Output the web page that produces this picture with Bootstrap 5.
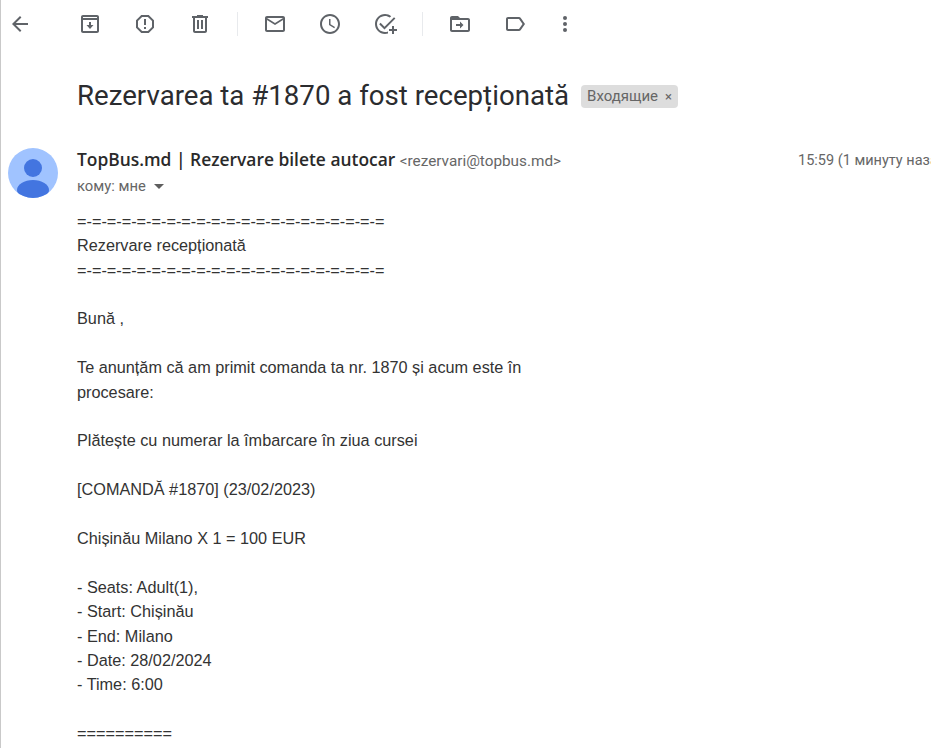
<!doctype html>
<html lang="ro">
<head>
<meta charset="utf-8">
<title>Rezervarea ta #1870</title>
<link href="https://cdn.jsdelivr.net/npm/bootstrap@5.3.0/dist/css/bootstrap.min.css" rel="stylesheet">
<style>
html,body{height:100%;overflow:hidden}
body{background:#fff;font-family:"Liberation Sans",Arial,sans-serif;color:#333}
.mail-frame{width:931px;height:748px;overflow:hidden;border-left:1px solid #c9c9c9}
.tool-bar{height:48px}
.tool-btn{width:55px;height:48px;color:#5f6368}
.tool-back{width:37px;margin-right:24.5px}
.tool-narrow{width:45px}
.tool-btn svg{width:24px;height:24px;fill:currentColor}
.tool-sep{width:1px;height:24px;background:#e8eaed;margin:0 9.5px}
.subject-row{margin-left:76px;margin-top:23px;height:50px}
.subject-text{font-family:Roboto,sans-serif;font-size:27.65px;line-height:50px;color:#2b2c2f;white-space:nowrap}
.label-chip{background:#ddd;color:#666;font-size:15px;height:23px;line-height:23px;padding:0 6px;border-radius:4px;margin-left:12px;font-family:Roboto,sans-serif;white-space:nowrap}
.label-chip span{margin-left:7px;font-size:13px}
.head-row{margin-top:27px;height:50px;padding-left:7px}
.avatar-box{width:50px;height:50px;flex:none;margin-right:19px}
.head-main{width:721px;flex:none;margin-top:-1px}
.sender-line{font-family:"Open Sans",sans-serif;font-size:17.4px;line-height:24px;color:#2a2a2a;white-space:nowrap}
.sender-line b{font-weight:600}
.sender-line span{font-family:Roboto,sans-serif;font-size:15.300px;color:#666;margin-left:0}
.to-line{font-family:Roboto,sans-serif;font-size:14.800px;line-height:24px;color:#666;display:flex;align-items:center;margin-top:1px}
.to-caret{width:0;height:0;border-left:5px solid transparent;border-right:5px solid transparent;border-top:5px solid #5e5e5e;margin-left:8px}
.time-text{font-family:Roboto,sans-serif;font-size:14.5px;line-height:24px;color:#666;white-space:nowrap;padding-top:1px}
.msg-body{margin:10.8px 0 0 76px;width:455px;font-size:16.25px;line-height:24.4px;color:#333}
.msg-body p{margin:0 0 24.4px}
</style>
</head>
<body>
<div class="mail-frame">
  <div class="tool-bar d-flex align-items-center">
    <div class="tool-btn tool-back d-flex align-items-center justify-content-center"><svg viewBox="0 0 24 24"><path d="M20 11H7.83l5.59-5.59L12 4l-8 8 8 8 1.41-1.41L7.83 13H20v-2z"/></svg></div>
    <div class="tool-btn d-flex align-items-center justify-content-center"><svg viewBox="0 0 24 24"><path d="M19 3H5c-1.1 0-2 .9-2 2v14c0 1.1.9 2 2 2h14c1.1 0 2-.9 2-2V5c0-1.100-.9-2-2-2zm0 16H5V8h14v11zM5 6V5h14v1H5z"/><path d="M11 10h2v3h2.500L12 17l-3.500-4H11z"/></svg></div>
    <div class="tool-btn d-flex align-items-center justify-content-center"><svg viewBox="0 0 24 24"><path d="M15.730 3H8.270L3 8.270v7.460L8.270 21h7.460L21 15.730V8.270L15.730 3zM19 14.900L14.900 19H9.100L5 14.900V9.100L9.100 5h5.800L19 9.100v5.800z"/><path d="M11 7h2v6h-2zM11 15h2v2h-2z"/></svg></div>
    <div class="tool-btn d-flex align-items-center justify-content-center"><svg viewBox="0 0 24 24"><path d="M15 4V3H9v1H4v2h1v13c0 1.100.9 2 2 2h10c1.100 0 2-.9 2-2V6h1V4h-5zm2 15H7V6h10v13z"/><path d="M9 8h2v9H9zm4 0h2v9h-2z"/></svg></div>
    <div class="tool-sep"></div>
    <div class="tool-btn d-flex align-items-center justify-content-center"><svg viewBox="0 0 24 24"><path d="M20 4H4c-1.100 0-2 .9-2 2v12c0 1.100.9 2 2 2h16c1.100 0 2-.9 2-2V6c0-1.100-.9-2-2-2zm0 14H4V8l8 5 8-5v10zm-8-7L4 6h16l-8 5z"/></svg></div>
    <div class="tool-btn d-flex align-items-center justify-content-center"><svg viewBox="0 0 24 24"><path d="M11.990 2C6.470 2 2 6.480 2 12s4.470 10 9.990 10C17.520 22 22 17.520 22 12S17.520 2 11.990 2zM12 20c-4.420 0-8-3.580-8-8s3.580-8 8-8 8 3.580 8 8-3.580 8-8 8z"/><path d="M12.500 7H11v6l5.250 3.150.75-1.230-4.500-2.670z"/></svg></div>
    <div class="tool-btn d-flex align-items-center justify-content-center"><svg viewBox="0 0 24 24"><path d="M12 20c-4.420 0-8-3.580-8-8s3.580-8 8-8c1.800 0 3.400.6 4.800 1.600l1.400-1.400C16.500 2.800 14.400 2 12 2 6.480 2 2 6.480 2 12s4.480 10 10 10c1.100 0 2.100-.2 3-.5v-2.100c-.9.400-1.900.6-3 .6z"/><path d="M21 5.200L11.500 14.700l-3.900-3.900-1.400 1.400 5.300 5.300L22.400 6.600z"/><path d="M19 14h2v3h3v2h-3v3h-2v-3h-3v-2h3z"/></svg></div>
    <div class="tool-sep"></div>
    <div class="tool-btn d-flex align-items-center justify-content-center"><svg viewBox="0 0 24 24"><path d="M20 6h-8l-2-2H4c-1.100 0-2 .9-2 2v12c0 1.100.9 2 2 2h16c1.100 0 2-.9 2-2V8c0-1.100-.9-2-2-2zm0 12H4V8h16v10z"/><path d="M12 9.500l3.500 3.500-3.500 3.500v-2.500H8v-2h4z"/></svg></div>
    <div class="tool-btn d-flex align-items-center justify-content-center"><svg viewBox="0 0 24 24"><path d="M17.630 5.840C17.270 5.330 16.670 5 16 5L5 5.010C3.900 5.010 3 5.900 3 7v10c0 1.100.9 1.990 2 1.990L16 19c.67 0 1.270-.33 1.630-.84L22 12l-4.370-6.160zM16 17H5V7h11l3.550 5L16 17z"/></svg></div>
    <div class="tool-btn tool-narrow d-flex align-items-center justify-content-center"><svg viewBox="0 0 24 24"><circle cx="12" cy="6" r="2"/><circle cx="12" cy="12" r="2"/><circle cx="12" cy="18" r="2"/></svg></div>
  </div>
  <div class="subject-row d-flex align-items-center">
    <div class="subject-text">Rezervarea ta #1870 a fost recepționată</div>
    <div class="label-chip">Входящие<span>×</span></div>
  </div>
  <div class="head-row d-flex">
    <div class="avatar-box"><svg viewBox="0 0 50 50" width="50" height="50"><defs><clipPath id="av"><circle cx="25" cy="25" r="25"/></clipPath></defs><circle cx="25" cy="25" r="25" fill="#a0c3ff"/><g clip-path="url(#av)" fill="#4375e0"><circle cx="25" cy="20" r="9"/><ellipse cx="25" cy="42" rx="16" ry="10"/></g></svg></div>
    <div class="head-main">
      <div class="sender-line"><b>TopBus.md | Rezervare bilete autocar</b> <span>&lt;rezervari@topbus.md&gt;</span></div>
      <div class="to-line">кому: мне<i class="to-caret"></i></div>
    </div>
    <div class="time-text">15:59 (1 минуту назад)</div>
  </div>
  <div class="msg-body">
    <p>=-=-=-=-=-=-=-=-=-=-=-=-=-=-=-=-=-=-=-=-=<br>Rezervare recepționată<br>=-=-=-=-=-=-=-=-=-=-=-=-=-=-=-=-=-=-=-=-=</p>
    <p>Bună ,</p>
    <p>Te anunțăm că am primit comanda ta nr. 1870 și acum este în procesare:</p>
    <p>Plătește cu numerar la îmbarcare în ziua cursei</p>
    <p>[COMANDĂ #1870] (23/02/2023)</p>
    <p>Chișinău Milano X 1 = 100 EUR</p>
    <p>- Seats: Adult(1),<br>- Start: Chișinău<br>- End: Milano<br>- Date: 28/02/2024<br>- Time: 6:00</p>
    <p>==========</p>
  </div>
</div>
<script src="https://cdn.jsdelivr.net/npm/bootstrap@5.3.0/dist/js/bootstrap.bundle.min.js"></script>
</body>
</html>
